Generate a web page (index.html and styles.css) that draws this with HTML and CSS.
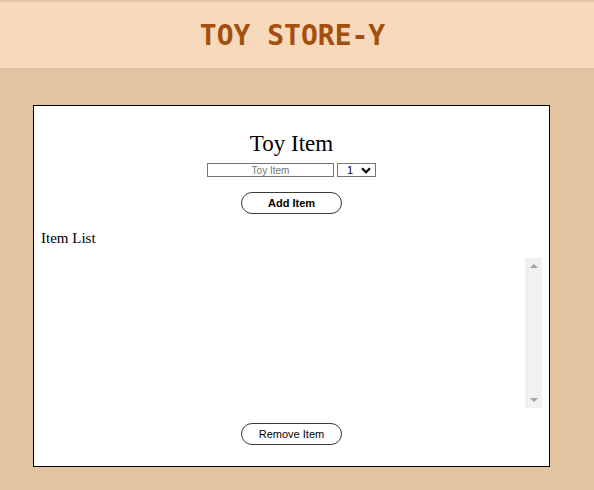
FILE: index.html
```html
<!DOCTYPE html>
<html>
<head>
<meta charset="utf-8">
<link rel="stylesheet" href="styles.css">
</head>
<body>
<header class="top">
  <h1 class="brand">TOY STORE-Y</h1>
</header>
<main class="page">
  <section class="card">
    <h2 class="title">Toy Item</h2>
    <div class="form-row">
      <input class="item-input" type="text" placeholder="Toy Item">
      <div class="qty">
        <select class="qty-select"><option>1</option></select>
        <svg class="chev" width="10" height="7" viewBox="0 0 10 7"><path d="M1 1.2 L5 5.2 L9 1.2" fill="none" stroke="#000" stroke-width="2.2"/></svg>
      </div>
    </div>
    <button class="btn btn-bold">Add Item</button>
    <div class="list-label">Item List</div>
    <div class="list">
      <div class="list-body"></div>
      <div class="scrollbar">
        <span class="arrow arrow-up"></span>
        <span class="arrow arrow-down"></span>
      </div>
    </div>
    <button class="btn">Remove Item</button>
  </section>
</main>
</body>
</html>
```
FILE: styles.css
```css
html, body {
  margin: 0;
  padding: 0;
}
body {
  background: #e3c4a2;
  width: 594px;
  height: 490px;
  overflow: hidden;
}
.top {
  margin-top: 2px;
  height: 66px;
  background: #f7d9bb;
  display: flex;
  align-items: center;
  justify-content: center;
  padding-right: 9px;
}
.brand {
  margin: 0;
  font-family: "DejaVu Sans Mono", monospace;
  font-weight: bold;
  font-size: 28px;
  line-height: 32px;
  color: #a24f10;
  position: relative;
  top: 1px;
}
.page {
  padding: 37px 0 0 33px;
}
.card {
  box-sizing: border-box;
  width: 517px;
  height: 362px;
  border: 1px solid #000;
  background: #fff;
  display: flex;
  flex-direction: column;
  align-items: center;
  padding: 24px 7px 0 7px;
}
.title {
  margin: 0;
  font-family: "Liberation Serif", serif;
  font-weight: normal;
  font-size: 23px;
  line-height: 27px;
  color: #000;
}
.form-row {
  margin-top: 6px;
  display: flex;
  gap: 3px;
  align-items: flex-start;
}
.item-input {
  display: block;
  box-sizing: border-box;
  width: 127px;
  height: 14px;
  margin: 0;
  padding: 0;
  border: 1px solid #767676;
  border-radius: 0;
  font-family: "Liberation Sans", Arial, sans-serif;
  font-size: 10px;
  text-align: center;
  outline: none;
}
.item-input::placeholder {
  color: #757575;
}
.qty {
  position: relative;
  width: 39px;
  height: 14px;
}
.qty-select {
  display: block;
  box-sizing: border-box;
  appearance: none;
  -webkit-appearance: none;
  width: 39px;
  height: 14px;
  margin: 0;
  padding: 0 0 0 9px;
  border: 1px solid #767676;
  border-radius: 0;
  background: #fff;
  font-family: "Liberation Sans", Arial, sans-serif;
  font-size: 11px;
  line-height: 12px;
  color: #000;
}
.chev {
  position: absolute;
  left: 24px;
  top: 4px;
}
.btn {
  box-sizing: border-box;
  margin: 15px 0 0 0;
  width: 101px;
  height: 22px;
  padding: 0;
  border: 1px solid #3a3a3a;
  border-radius: 11px;
  background: #fff;
  font-family: "Liberation Sans", Arial, sans-serif;
  font-size: 11px;
  color: #000;
}
.btn-bold {
  font-weight: bold;
}
.list-label {
  align-self: stretch;
  margin-top: 15px;
  font-family: "Liberation Serif", serif;
  font-size: 15px;
  line-height: 18px;
  color: #000;
}
.list {
  align-self: stretch;
  margin-top: 11px;
  height: 150px;
  display: flex;
}
.list-body {
  flex: 1;
}
.scrollbar {
  width: 17px;
  background: #f1f1f1;
  display: flex;
  flex-direction: column;
  justify-content: space-between;
  align-items: center;
  padding: 6px 0 6px;
  box-sizing: border-box;
}
.arrow {
  width: 0;
  height: 0;
  border-left: 4px solid transparent;
  border-right: 4px solid transparent;
}
.arrow-up {
  border-bottom: 4px solid #a3a3a3;
}
.arrow-down {
  border-top: 4px solid #a3a3a3;
}
```
